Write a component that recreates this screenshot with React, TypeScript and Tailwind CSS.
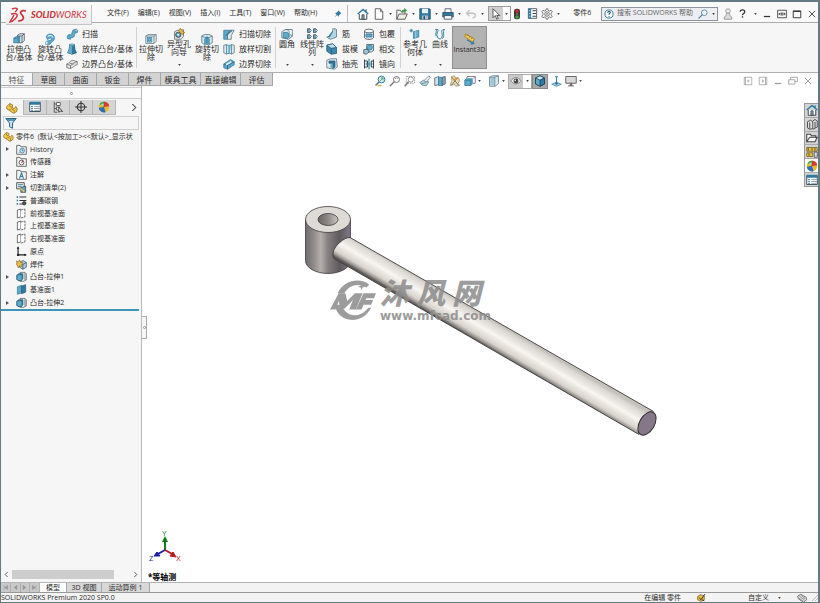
import { useState } from 'react';
import type { ReactNode } from 'react';

const BLUE = '#5fa9c9';
const DEEP = '#2f7a9e';
const INK = '#37474f';

// All glyphs share a 16x16 grid
const glyphs: Record<string, ReactNode> = {
  extrude: <><path d="M6 3 9 1h6v9l-3 3H6z" fill="#e6ecef" stroke={INK} /><path d="M12 4v9M12 4l3-3M6 4h6" fill="none" stroke={INK} /><path d="M1 7l3-2h5v6l-2 2H1z" fill={BLUE} stroke={DEEP} /><path d="M1 7h6v6M7 7l2-2" fill="none" stroke={DEEP} /></>,
  revolve: <><path d="M3 5C4 0 13 0 14 6c0 4-2 5-4 6l-2 3H2l1-4 5-1c3-1 2-4-1-3L5 9z" fill={BLUE} stroke={DEEP} /><path d="M5 5c2-3 6-2 7 1" fill="none" stroke="#d7edf6" strokeWidth="1.500" /><path d="M2 15l1-4 2 1-1 3z" fill="#d7edf6" /></>,
  sweep: <><path d="M2 14c-1-4 1-6 4-5 3 0 1-6 5-7l4 1v3l-3 1c-1 2 0 5-4 6-2 0-2 0-2 2z" fill={BLUE} stroke={DEEP} /><ellipse cx="13.500" cy="3.500" rx="1.500" ry="2" fill="#cfe7f1" stroke={DEEP} /></>,
  loft: <><path d="M5 2h6l1 7 2 4-6 2-6-2 2-4z" fill={DEEP} stroke="#245a75" /><path d="M5 2h3v13l-6-2 2-4z" fill={BLUE} /><ellipse cx="8" cy="2.500" rx="3" ry="1.200" fill="#d7edf6" stroke={DEEP} /></>,
  boundary: <><path d="M1 8c3 0 3-4 8-5l6 2v4c-4 0-5 4-9 5l-5-1z" fill="#e4e4e4" stroke="#666" /><path d="M1 8l5 2c3-1 5-5 9-5M6 10v4M5 7l5 1" fill="none" stroke="#666" /></>,
  cutExtrude: <><path d="M1 4l3-2h11v9l-3 3H1z" fill="#e0e8eb" stroke="#6d7f87" /><path d="M1 4h11v10M12 4l3-2" fill="none" stroke="#6d7f87" /><rect x="3" y="6" width="6" height="6" fill="#fff" stroke={DEEP} /><circle cx="6" cy="9" r="2" fill={BLUE} stroke={DEEP} /></>,
  hole: <><path d="M2 5l4-2h8v8l-3 4H2z" fill="#dfe6e9" stroke="#566" /><circle cx="7" cy="9" r="3.500" fill={BLUE} stroke="#333" /><circle cx="7" cy="9" r="1.300" fill="#fff" /><path d="M10 0l1 3 3-1-1 3 3 1-3 1 1 2-4-2-2-4z" fill="#edbc4b" stroke="#8a5d12" strokeWidth=".7" /></>,
  cutRevolve: <><path d="M1 4l4-2h6l4 2v9l-3 2H4l-3-2z" fill="#dce7eb" stroke="#53707d" /><path d="M5 15V8l3-3 3 3v7" fill={BLUE} stroke={DEEP} /><path d="M8 5v10M1 4l4 2h6l4-2" fill="none" stroke={DEEP} /></>,
  cutSweep: <><path d="M1 3h8l-3 5v7H1z" fill={BLUE} stroke={DEEP} /><path d="M6 15V9l3-6h6l-4 7v5z" fill="#e2e9ec" stroke="#586d76" /><path d="M4 10l8-7" stroke={DEEP} strokeWidth="2" /></>,
  cutLoft: <><path d="M1 3l4-1v13l-4-2zM15 3l-4-1v13l4-2z" fill="#e2e9ec" stroke="#586d76" /><path d="M5 3h6v11H5z" fill="#fff" stroke={DEEP} /><path d="M7 3h3l-1 11H7z" fill={BLUE} /></>,
  cutBoundary: <><path d="M1 8l9-6 5 3v4l-9 6-5-2z" fill={BLUE} stroke={DEEP} /><path d="M1 8l5 2 9-5M6 10v5" fill="none" stroke="#245a75" /><path d="M4 9l7-4" stroke="#e0f1f8" strokeWidth="2" /></>,
  fillet: <><path d="M1 5l5-3h8l1 9-5 4-9-2z" fill="#dce7eb" stroke="#53707d" /><path d="M6 2c5 0 5 3 5 6l4 3V2z" fill="#fff" stroke="#53707d" /><path d="M3 6h5c3 1 3 3 3 6l-2 2-6-1z" fill={BLUE} stroke={DEEP} /></>,
  pattern: <>{[1, 9].map(y => <g key={y}><path d={`M2 ${y}h3v5H2zM10 ${y}h3v5h-3z`} fill={BLUE} stroke={INK} /><path d={`M5 ${y}l2 2-2 3M13 ${y}l2 2-2 3`} fill="#fff" stroke={INK} /></g>)}</>,
  rib: <><path d="M9 1h3v10l-8 3-3-2 8-2z" fill="#e2e9ec" stroke="#53707d" /><path d="M9 4v7l-6 1z" fill={DEEP} stroke={DEEP} /><path d="M12 1l2 1v10l-8 3-2-1" fill="#b5d5e2" stroke="#53707d" /></>,
  draft: <><path d="M1 3l8-2 5 5v8l-7 1-6-4z" fill="#3e87a8" stroke="#245a75" /><path d="M1 3l6 4 7-1-5-5z" fill="#bfe0ed" stroke="#245a75" /><path d="M7 7v8" stroke="#245a75" /></>,
  shell: <><path d="M1 3l5-2h8l1 11-4 3-10-2z" fill="#e2e9ec" stroke="#53707d" /><path d="M4 4h8v8l-3 2V7H4z" fill={DEEP} stroke="#245a75" /><path d="M6 8h3v5H6z" fill={BLUE} /></>,
  wrap: <><path d="M2 4v9c2 3 10 3 12 0V4" fill="#e2e9ec" stroke={INK} /><ellipse cx="8" cy="4" rx="6" ry="2.500" fill="#fff" stroke={INK} /><path d="M4 8h8v4H4z" fill={BLUE} stroke={DEEP} /></>,
  intersect: <><path d="M5 2h9v8l-3 2H5z" fill="#e2e9ec" stroke={INK} /><circle cx="9" cy="6" r="3.500" fill={BLUE} stroke={DEEP} /><path d="M1 9l5-1 2 4-4 3-3-1z" fill="#9fc9da" stroke={INK} /></>,
  mirror: <><path d="M2 2v12M2 4h4v8H2M14 2v12M14 4h-3v8h3" fill="none" stroke={INK} strokeWidth="1.300" /><path d="M8 1v14" stroke={DEEP} strokeWidth="1.500" /><path d="M3 8h10M5 6v4M11 6v4" stroke={DEEP} /></>,
  refGeo: <><path d="M6 5l7-2v9l-7 2z" fill={BLUE} stroke={DEEP} /><path d="M3 1v5M.500 3.500h5M1.500 2l3 3M4.500 2l-3 3" stroke={DEEP} /><path d="M9 4v9" stroke="#b9deec" /></>,
  curve: <path d="M2 2h3c2 0-2 5-1 8 1 6 7 6 7 0 0-4-3-8 3-8M2 2c3 1-1 6 1 9M11 14c4-2 0-9 3-12" fill="none" stroke={DEEP} strokeWidth="1.300" />,
  ruler: <><path d="M2 1l12 7-2 4L1 5z" fill="#f1c85a" stroke="#a07b1b" /><path d="M4 4l1-2M7 6l1-2M10 8l1-2" stroke="#7f6114" /><path d="M4 9l8 5M9 15l4-1-1-3" fill="none" stroke={DEEP} strokeWidth="1.500" /></>,
  home: <><path d="M3 8v7h10V8" fill="#fff" stroke={INK} strokeWidth="1.300" /><path d="M1 8l7-6 7 6M12 5V2" fill="none" stroke={DEEP} strokeWidth="2" /><path d="M6.500 9h3v6h-3z" fill="#8a9da6" stroke={INK} /></>,
  file: <><path d="M3 1h7l3 4v10H3z" fill="#fff" stroke="#555" strokeWidth="1.200" /><path d="M10 1v4h3" fill="none" stroke="#555" /></>,
  open: <><path d="M1 3h5l1 2h5v3M1 3v12l3-7h11l-3 7H1" fill="#f0eee0" stroke="#555" strokeWidth="1.200" /><path d="M8 6c0-3 2-3 4-3" fill="none" stroke="#3c9a4a" strokeWidth="2" /><path d="M11 0l4 3-4 3z" fill="#3c9a4a" /></>,
  save: <><path d="M1 1h13l1 1v13H1z" fill={DEEP} stroke="#22495c" /><path d="M4 1h8v6H4z" fill="#e9f2f5" /><path d="M4 10h8v5H4z" fill="#aebfc7" /><path d="M6 11h2v4H6z" fill="#22495c" /></>,
  print: <><path d="M4 1h8v6H4z" fill="#fff" stroke={INK} /><path d="M1 6h14v6H1z" fill={DEEP} stroke="#22495c" /><path d="M3 10h10v5H3z" fill="#e9f2f5" stroke={INK} /></>,
  undo: <path d="M6 3L2 7l4 4M2 7h8c5 0 5 6 0 6" fill="none" stroke="#c3c3c3" strokeWidth="1.700" />,
  cursor: <path d="M4 1v12l3-3 2 5 2-1-2-4h4z" fill="#fff" stroke="#333" />,
  traffic: <><rect x="4" y="1" width="8" height="14" rx="3" fill="#3e3e3e" /><circle cx="8" cy="4" r="2.300" fill="#d42626" /><circle cx="8" cy="8" r="1.300" fill="#7b7343" /><circle cx="8" cy="12" r="2.300" fill="#36a642" /></>,
  options: <><path d="M2 1h12v14H2z" fill="#fff" stroke={INK} strokeWidth="1.200" /><path d="M2 1h4v14H2z" fill={DEEP} /><path d="M8 4h5M8 8h5M8 12h5" stroke={INK} strokeWidth="1.500" /><path d="M3 4h2M3 8h2M3 12h2" stroke="#fff" /></>,
  props: <><path d="M1 2h14v12H1z" fill="#fff" stroke="#3a5360" strokeWidth="1.300" /><path d="M1 1h14v4H1z" fill={DEEP} /><path d="M3 7.500h2M3 10h2M3 12.500h2" stroke={DEEP} strokeWidth="1.500" /><path d="M7 7.500h7M7 10h7M7 12.500h7" stroke="#74868f" /></>,
  gear: <><path d="M7 1h2l.500 2 2 1 2-1 1.500 2-1.500 2v2l1.500 2-1.500 2-2-1-2 1L9 15H7l-.500-2-2-1-2 1L1 11l1.500-2V7L1 5l1.500-2 2 1 2-1z" fill="#f3f3f3" stroke="#555" /><circle cx="8" cy="8" r="3" fill="none" stroke="#555" /><circle cx="8" cy="8" r="1" fill="#555" /></>,
  help: <><circle cx="8" cy="8" r="6.500" fill="#fff" stroke={DEEP} strokeWidth="1.500" /><path d="M6 6c0-3 5-2 4 0-.500 1-2 1-2 3M8 11v1.500" fill="none" stroke="#234f66" strokeWidth="1.700" /></>,
  search: <><circle cx="10" cy="6" r="4.500" fill="#f3faff" stroke="#3f7897" strokeWidth="1.200" /><path d="M7 9l-6 6" stroke="#3f7897" strokeWidth="1.700" /></>,
  user: <><circle cx="8" cy="4" r="3" fill="#eee" stroke="#999" strokeWidth="1.200" /><path d="M6 7h4l1 4 2 1v3H3v-3l2-1z" fill="#ddd" stroke="#999" strokeWidth="1.200" /></>,
  question: <path d="M4 5c0-5 8-4 8 0 0 3-4 3-4 6M8 13v2.500" fill="none" stroke="#333" strokeWidth="2.300" />,
  minimize: <path d="M3 12h10" stroke="currentColor" strokeWidth="2" />,
  span: <><path d="M1 2h14v12H1z" fill="none" stroke="currentColor" strokeWidth="1.300" /><path d="M3 8h10M5 6L3 8l2 2M11 6l2 2-2 2M8 5v6" fill="none" stroke="currentColor" strokeWidth="1.300" /></>,
  maximize: <path d="M2 3h12v11H2zM2 4h12" fill="none" stroke="currentColor" strokeWidth="1.500" />,
  close: <path d="M3 3l10 10M13 3L3 13" stroke="currentColor" strokeWidth="1.400" />,
  restore: <path d="M1 6h10v7H1zM4 6V2h11v7h-4" fill="none" stroke="currentColor" strokeWidth="1.300" />,
  paneLeft: <path d="M2 2h12v12H2zM4 2v12M9 6L7 8l2 2z" fill="none" stroke="currentColor" strokeWidth="1.200" />,
  paneRight: <path d="M2 2h12v12H2zM12 2v12M7 6l2 2-2 2z" fill="none" stroke="currentColor" strokeWidth="1.200" />,
  pin: <path d="M9 1l6 6-2 .500-3 3-.500 3-3.500-3.500L1 15l4-6-3-3 3-.500 3-3z" fill={DEEP} />,
  zoomFit: <><circle cx="10" cy="6" r="4.500" fill="#d6ecf3" stroke={DEEP} strokeWidth="1.300" /><path d="M7 9l-5 5" stroke="#59717e" strokeWidth="2" /><path d="M8 8l4-4M9 4h3v3" fill="none" stroke="#3a9b4b" /><path d="M5 14h5" stroke="#ccb24f" strokeWidth="2" /></>,
  zoomArea: <><circle cx="10" cy="6" r="4" fill="#fff" stroke="#666" strokeWidth="1.200" /><path d="M7 9l-6 6" stroke="#777" strokeWidth="2" /><path d="M8 5l2-1 2 1" fill="none" stroke="#888" /></>,
  zoomPrev: <><path d="M3 2h11v9H3z" fill="none" stroke="#888" strokeDasharray="2 1" /><circle cx="9" cy="6" r="3.500" fill="#fff" stroke="#777" /><path d="M6 9l-5 6" stroke="#777" strokeWidth="2" /></>,
  section: <><path d="M6 8l7-7 2 2-6 8z" fill="#e8eef0" stroke="#6f8189" /><path d="M1 10l5-3 3 2 4 0-3 5-5 0z" fill="#b9d5e1" stroke="#5b7886" /><path d="M3 12l6-2" stroke="#5b7886" /></>,
  book: <><path d="M1 4l5-2v11l-5 1z" fill="#dae3e7" stroke="#456" /><path d="M6 3h5v11H6z" fill={BLUE} stroke={DEEP} /><path d="M11 3l4-1v10l-4 2z" fill="#8fa5ae" stroke="#456" /></>,
  sketchTool: <><path d="M3 2l4-1 2 3 4 0 1 4-2 3 2 3-5 1-2-3-5 2 1-5 1-2z" fill="#f0dcae" stroke="#98855a" /><path d="M4 3l9 11M12 3L3 14" stroke="#6f7d84" strokeWidth="1.300" /><path d="M6 7l5-3" stroke="#d99a2d" strokeWidth="2" /></>,
  views: <><path d="M1 7h8v7H1zM1 7l2-2h8v7l-2 2" fill={BLUE} stroke={DEEP} /><path d="M4 4V2h11v9h-3" fill="none" stroke="#778" strokeWidth="1.200" /><path d="M12 5l3-3" stroke="#778" /></>,
  display: <><path d="M2 3l4-2h8v10l-4 4H2z" fill="#d8e6ec" stroke="#5b7886" /><path d="M2 3h7v12M9 3l5-2" fill="none" stroke="#5b7886" /><path d="M3 4h5v10H3z" fill="#9bcadd" /></>,
  eye: <><path d="M1 8c4-6 10-6 14 0-4 5-10 5-14 0z" fill="#e4e4e4" stroke="#777" /><circle cx="8" cy="8" r="3.200" fill="#444" /><circle cx="7" cy="7" r="1" fill="#fff" /></>,
  cube: <><path d="M2 4l6-3 6 3v8l-6 3-6-3z" fill={BLUE} stroke="#183f53" strokeWidth="1.200" /><path d="M2 4l6 3 6-3-6-3z" fill="#c4e6f3" stroke="#183f53" /><path d="M8 7l6-3v8l-6 3z" fill={DEEP} stroke="#183f53" /></>,
  anchor: <><path d="M1 12l7-3 7 3-7 3z" fill="#a7cfdf" stroke={DEEP} /><path d="M8 1v11M6 1h4M6 10l2 2 2-2" fill="none" stroke={DEEP} strokeWidth="1.500" /></>,
  monitor: <><path d="M1 2h14v9H1z" fill="#d8d8d8" stroke="#666" strokeWidth="1.300" /><path d="M7 11h2v3H7zM4 14.500h8" fill="#777" stroke="#666" strokeWidth="1.300" /></>,
  part: <><path d="M1 6l4-4 4 2-1 3 3 2 2-3 2 3-1 4-4 2-6-4-3-2z" fill="#f2c84c" stroke="#8b6815" /><path d="M5 2v4l3 1M4 11l3-2 4 2v4" fill="none" stroke="#a27b1d" /></>,
  config: <><path d="M3 1v14h4M3 4h3M3 10h3" fill="none" stroke="#555" strokeWidth="1.200" /><path d="M6 2h5v4H6zM6 8h4v4H6z" fill="#fff" stroke="#555" strokeWidth="1.200" /><path d="M9 8l5 6-3-.500L9 15z" fill="#fff" stroke="#333" strokeWidth="1.200" /></>,
  target: <><circle cx="8" cy="8" r="5" fill="none" stroke="#333" strokeWidth="1.400" /><path d="M8 0v16M0 8h16" stroke="#333" strokeWidth="1.400" /></>,
  ball: <><circle cx="8" cy="8" r="7" fill="#e9ba2d" /><path d="M8 8L2 4a7 7 0 0 1 7-3z" fill="#39a34b" /><path d="M8 8V1a7 7 0 0 1 7 6z" fill="#d93b2f" /><path d="M8 8L1 9a7 7 0 0 0 9 6z" fill="#2a6fb8" /><circle cx="6" cy="5" r="1.800" fill="#fff" fillOpacity=".6" /></>,
  funnel: <><path d="M1 2h14l-5 6v7l-4-2V8z" fill="#c7e2ec" stroke="#29647f" strokeWidth="1.300" /><path d="M2 3h12l-2 2H4z" fill={DEEP} /></>,
  history: <><path d="M1 2h5l1 2h8v11H1z" fill="#f4f4f4" stroke="#555" strokeWidth="1.200" /><circle cx="9" cy="9.500" r="3.500" fill="#b8dbe7" stroke={DEEP} /><path d="M9 7.500v2h2M4 13l2-2" fill="none" stroke={DEEP} /></>,
  sensor: <><path d="M1 2h5l1 2h8v11H1z" fill="#f4f4f4" stroke="#555" strokeWidth="1.200" /><circle cx="8" cy="9.500" r="3.500" fill="#fff" stroke="#444" strokeWidth="1.200" /><path d="M8 10l2-3" stroke="#b33" strokeWidth="1.500" /></>,
  note: <><path d="M1 2h5l1 2h8v11H1z" fill="#f4f4f4" stroke="#555" strokeWidth="1.200" /><path d="M5 14l3-8 3 8M6 11h4" fill="none" stroke={DEEP} strokeWidth="1.600" /></>,
  cutList: <><path d="M1 1h11v9H1z" fill="#f4f4f4" stroke="#444" strokeWidth="1.300" /><path d="M3 4h7M3 7h5" stroke={DEEP} strokeWidth="1.500" /><path d="M7 8l7-2v9H7z" fill={BLUE} stroke="#333" /><path d="M6 9l6 5" stroke="#edbc4b" strokeWidth="2" /></>,
  material: <><path d="M1 3h2M1 8h2M1 13h2" stroke={DEEP} strokeWidth="2.500" /><path d="M5 3h10M5 8h10M5 13h5" stroke="#333" strokeWidth="1.500" /><circle cx="12" cy="12" r="2.500" fill="#555" stroke="#222" /></>,
  plane: <><path d="M2 3l5-1.500V13l-5 1.500z" fill="#fff" stroke="#555" strokeWidth="1.200" /><path d="M7 3l6-1.500V13l-6 1.500" fill="#fff" stroke="#555" strokeWidth="1.200" strokeDasharray="4 1" /></>,
  origin: <><path d="M3 1v12h12" fill="none" stroke="#222" strokeWidth="1.700" /><path d="M1 4l2-3 2 3M12 11l3 2-3 2" fill="#222" /><circle cx="3" cy="13" r="1.700" fill="#222" /></>,
  weld: <><path d="M5 5l5-3 5 3v7l-5 3-5-3z" fill="#a8ccd9" stroke="#37505c" /><path d="M5 5l5 3 5-3M10 8v7" fill="none" stroke="#37505c" /><path d="M0 3l4 1 1-3 2 4 3 0-2 3 1 3-4-1-2 3-1-4-3-2 3-1z" fill="#eebc48" stroke="#7d4c13" strokeWidth=".7" /></>,
  boss: <><path d="M6 2h7l2 2v9l-4 2H6z" fill="#e6ecef" stroke="#455" /><path d="M13 3v10" stroke="#455" /><path d="M1 6l3-2h6v7l-2 3H3l-2-2z" fill={DEEP} stroke="#245a75" /><path d="M2 6h6v7H3l-1-1z" fill={BLUE} /></>,
  planeSolid: <><path d="M2 4l6-2v11l-6 2z" fill={BLUE} stroke={DEEP} /><path d="M8 3l6-2v11l-6 2z" fill={DEEP} stroke="#245a75" /></>,
  cylinders: <><path d="M2 5l4-2 3 2v9l-4 1-3-2zM9 4l3-2 3 2v8l-6 3" fill="#e1e1e1" stroke="#444" strokeWidth="1.200" /><path d="M5 6v8M12 5v8" stroke="#444" strokeWidth="1.300" /></>,
  folder: <path d="M1 13V3h5l1 2h6v3M1 13l4-6h10l-3 6z" fill="#fafafa" stroke="#444" strokeWidth="1.400" />,
  palette: <><path d="M1 2h14v5H1zM1 9h8v5H1z" fill="#e7c04c" stroke="#6d5a1f" /><path d="M11 8h4v7h-4z" fill="#d8dfe2" stroke="#444" /><path d="M3 3v3M8 3v3M12 3v3M4 10v3" fill="none" stroke="#554514" strokeWidth="1.300" /></>,
  badge: <><path d="M1 6l5-3 7 2v7l-6 3-6-3z" fill="#e9b93c" stroke="#5b4411" /><path d="M4 8l3 4 7-10M9 12l4 2" fill="none" stroke="#333" strokeWidth="1.700" /></>,
  tag: <><path d="M1 5l5-3 9 5v4l-5 4-8-6z" fill="#e0e0e0" stroke="#555" strokeWidth="1.200" /><path d="M4 5l8 6M7 4l6 5M3 8l7 5" stroke="#666" /></>,
};

const Icon = ({ name, className = 'size-3' }: { name: string; className?: string }) => (
  <svg viewBox="0 0 16 16" className={`shrink-0 ${className}`} aria-hidden="true">{glyphs[name]}</svg>
);

const Caret = ({ className = '' }: { className?: string }) => (
  <svg viewBox="0 0 4 3" className={`h-[2px] w-[3px] shrink-0 ${className}`} aria-hidden="true"><path d="M0 0h4L2 3z" fill="#444" /></svg>
);

const menus = [['文件', 'F'], ['编辑', 'E'], ['视图', 'V'], ['插入', 'I'], ['工具', 'T'], ['窗口', 'W'], ['帮助', 'H']];
const commandTabs = ['特征', '草图', '曲面', '钣金', '焊件', '模具工具', '直接编辑', '评估'];
const panelTabs = [['part', '特征管理器'], ['props', '属性'], ['config', '配置'], ['target', '尺寸专家'], ['ball', '外观']];
const treeItems: { icon: string; label: string; expandable?: boolean }[] = [
  { icon: 'history', label: 'History', expandable: true },
  { icon: 'sensor', label: '传感器' },
  { icon: 'note', label: '注解', expandable: true },
  { icon: 'cutList', label: '切割清单(2)', expandable: true },
  { icon: 'material', label: '普通碳钢' },
  { icon: 'plane', label: '前视基准面' },
  { icon: 'plane', label: '上视基准面' },
  { icon: 'plane', label: '右视基准面' },
  { icon: 'origin', label: '原点' },
  { icon: 'weld', label: '焊件' },
  { icon: 'boss', label: '凸台-拉伸1', expandable: true },
  { icon: 'planeSolid', label: '基准面1' },
  { icon: 'boss', label: '凸台-拉伸2', expandable: true },
];

const BigTool = ({ icon, label, menu, className = 'w-7' }: { icon: string; label: string; menu?: boolean; className?: string }) => (
  <button className={`flex h-full shrink-0 flex-col items-center pb-[6px] ${menu ? 'pt-[5px]' : 'pt-[10px]'} ${className}`}>
    <Icon name={icon} />
    <span className="text-center text-[8px] leading-[8px] whitespace-pre">{label}</span>
    {menu && <Caret className="mt-auto" />}
  </button>
);

const SmallTools = ({ items, className }: { items: string[][]; className: string }) => (
  <div className={`flex shrink-0 flex-col pt-[3px] ${className}`}>
    {items.map(([icon, label]) => (
      <button key={label} className="flex h-[15px] items-center gap-1 text-[8px] whitespace-nowrap">
        <Icon name={icon} />{label}
      </button>
    ))}
  </div>
);

const Divider = () => <div className="my-1 w-px shrink-0 bg-[#d2d2d2]" />;

const QuickTool = ({ name, label }: { name: string; label: string }) => (
  <button aria-label={label} className="flex shrink-0 items-center">
    <Icon name={name} />
    <span className="flex w-[11px] justify-center"><Caret /></span>
  </button>
);

const TitleBar = () => (
  <header className="relative z-10 flex h-[21px] shrink-0 items-center border-b border-[#a9adaf] bg-[#f9f9f9] pt-[3px]">
    <div className="ml-[5px] flex h-5 w-[86px] shrink-0 items-center gap-1 self-start border-r border-b border-[#c4c4c4] bg-linear-to-b from-[#fbfbfb] to-[#ececec] px-[3px]">
      <svg viewBox="0 0 18 16" className="h-4 w-[18px] shrink-0" fill="none" stroke="#c8353b" strokeWidth="1.500">
        <path d="M3 2c5-2 7 0 3 3M2 7c8-2 7 2 4 5-2 2-4 3-5 3l4-7" />
        <path d="M17 4c-5-1-7 1-4 4s1 6-4 6" strokeWidth="1.700" />
      </svg>
      <span className="font-['Lato'] text-[9px] leading-none text-[#c8353b] italic"><b className="font-black">SOLID</b>WORKS</span>
    </div>
    <nav className="ml-[15px] flex shrink-0 gap-[9px] text-[7px]">
      {menus.map(([label, key]) => (
        <button key={key} className="whitespace-nowrap">{label}({key})</button>
      ))}
    </nav>
    <button aria-label="固定菜单" className="ml-[17px] shrink-0"><Icon name="pin" className="size-2" /></button>
    <div className="ml-[5px] h-full w-px shrink-0 bg-[#bdbdbd]" />
    <div className="ml-[9px] flex shrink-0 items-center">
      <button aria-label="主页" className="mr-1"><Icon name="home" /></button>
      <QuickTool name="file" label="新建" />
      <QuickTool name="open" label="打开" />
      <QuickTool name="save" label="保存" />
      <QuickTool name="print" label="打印" />
      <QuickTool name="undo" label="撤销" />
      <button aria-label="选择" className="flex h-[15px] items-center border border-[#9c9c9c] bg-[#cfcfcf]">
        <Icon name="cursor" className="mx-px size-3" />
        <span className="flex h-full w-[7px] items-center justify-center bg-white"><Caret /></span>
      </button>
      <button aria-label="重建模型"><Icon name="traffic" /></button>
      <button aria-label="文件属性" className="ml-1"><Icon name="options" className="size-[11px]" /></button>
      <span className="w-[3px]" />
      <QuickTool name="gear" label="选项" />
    </div>
    <h1 className="ml-[9px] shrink-0 text-[7px] whitespace-nowrap">零件6</h1>
    <div className="ml-auto flex shrink-0 items-center pr-px text-[#333]">
      <label className="flex h-[14px] w-[117px] items-center border border-[#8e959e] bg-[#eceef2] px-[2px]">
        <Icon name="help" className="size-[10px]" />
        <input aria-label="搜索帮助" placeholder="搜索 SOLIDWORKS 帮助" className="ml-[3px] w-0 flex-1 bg-transparent text-[7px] outline-none placeholder:text-[#666]" />
        <Icon name="search" className="mr-1 size-[10px]" />
        <Caret />
      </label>
      <button aria-label="登录" className="ml-1"><Icon name="user" /></button>
      <button aria-label="帮助" className="ml-1 flex items-center gap-[7px]"><Icon name="question" className="size-[9px]" /><Caret /></button>
      {[['minimize', '最小化'], ['span', '跨屏'], ['maximize', '最大化'], ['close', '关闭']].map(([name, label]) => (
        <button key={name} aria-label={label} className="ml-[5px]"><Icon name={name} className="size-[10px]" /></button>
      ))}
    </div>
  </header>
);

const Ribbon = () => (
  <div className="flex h-[50px] shrink-0 overflow-hidden border-b border-[#aeb1b3] bg-[#f6f6f6] pl-[3px]">
    <BigTool icon="extrude" label={'拉伸凸\n台/基体'} className="w-[30px]" />
    <BigTool icon="revolve" label={'旋转凸\n台/基体'} className="w-8" />
    <SmallTools className="w-[70px]" items={[['sweep', '扫描'], ['loft', '放样凸台/基体'], ['boundary', '边界凸台/基体']]} />
    <Divider />
    <BigTool icon="cutExtrude" label={'拉伸切\n除'} />
    <BigTool icon="hole" label={'异型孔\n向导'} menu />
    <BigTool icon="cutRevolve" label={'旋转切\n除'} />
    <SmallTools className="w-[54px] pl-[2px]" items={[['cutSweep', '扫描切除'], ['cutLoft', '放样切割'], ['cutBoundary', '边界切除']]} />
    <Divider />
    <BigTool icon="fillet" label="圆角" menu className="w-[22px]" />
    <BigTool icon="pattern" label={'线性阵\n列'} menu />
    <SmallTools className="w-[37px]" items={[['rib', '筋'], ['draft', '拔模'], ['shell', '抽壳']]} />
    <SmallTools className="w-[37px]" items={[['wrap', '包覆'], ['intersect', '相交'], ['mirror', '镜向']]} />
    <Divider />
    <BigTool icon="refGeo" label={'参考几\n何体'} menu />
    <BigTool icon="curve" label="曲线" menu className="w-[22px]" />
    <button className="my-[3px] ml-px flex w-[35px] shrink-0 flex-col items-center border border-[#8f8f8f] bg-[#b2b2b2] pt-[6px] text-[7px] leading-[9px]">
      <Icon name="ruler" />
      Instant3D
    </button>
  </div>
);

const ViewToolbar = () => (
  <div className="ml-[101px] flex h-4 shrink-0 items-center gap-[3px]">
    {['zoomFit', 'zoomArea', 'zoomPrev', 'section', 'book', 'sketchTool'].map(name => (
      <button key={name} aria-label={name}><Icon name={name} /></button>
    ))}
    <button aria-label="views" className="flex items-center gap-[2px]"><Icon name="views" /><Caret /></button>
    <button aria-label="display" className="ml-1 flex items-center gap-[2px]"><Icon name="display" /><Caret /></button>
    <button aria-label="visibility" className="flex h-[15px] items-center border border-[#aaa] bg-[#c9c9c9] pl-px">
      <Icon name="eye" /><span className="ml-px flex h-full w-2 items-center justify-center bg-white"><Caret /></span>
    </button>
    <button aria-label="appearance" className="-ml-[3px] flex h-[15px] w-4 items-center justify-center border border-[#888] bg-[#a9a9a9]"><Icon name="cube" /></button>
    <button aria-label="scene"><Icon name="anchor" className="size-[11px]" /></button>
    <button aria-label="settings" className="flex items-center gap-[2px]"><Icon name="monitor" /><Caret /></button>
  </div>
);

const FeaturePanel = () => {
  const [tab, setTab] = useState('part');
  return (
    <aside className="flex w-[141px] shrink-0 flex-col border-r border-[#b9b9b9] bg-[#f6f6f6]">
      <div className="mt-px flex h-3 shrink-0 items-center justify-center border-y border-[#cfcfcf] bg-[#fafafa]">
        <span className="size-[3px] rounded-full border border-[#999]" />
      </div>
      <div className="flex h-4 shrink-0 pt-px">
        {panelTabs.map(([name, label]) => (
          <button key={name} aria-label={label} onClick={() => setTab(name)}
            className={`flex w-[23px] items-center justify-center border-r border-[#b5b5b5] ${tab === name ? 'bg-[#f6f6f6]' : 'border-b bg-[#d4d4d4]'}`}>
            <Icon name={name} />
          </button>
        ))}
        <button aria-label="更多" className="mr-1 ml-auto">
          <svg viewBox="0 0 6 8" className="h-[7px] w-[6px]"><path d="M1 0l4 4-4 4" fill="none" stroke="#444" strokeWidth="1.200" /></svg>
        </button>
      </div>
      <button aria-label="过滤" className="mx-[2px] mt-px flex h-[14px] shrink-0 items-center border border-[#d0d0d0] pl-px">
        <Icon name="funnel" />
      </button>
      <ul className="flex h-[179px] shrink-0 flex-col text-[7px] leading-none whitespace-nowrap">
        <li className="flex min-h-0 flex-1 items-center gap-[2px] overflow-hidden pl-[2px] whitespace-pre">
          <Icon name="part" className="size-[11px]" />{'零件6  (默认<按加工><<默认>_显示状'}
        </li>
        {treeItems.map(item => (
          <li key={item.label} className="flex min-h-0 flex-1 items-center">
            <span className="flex w-[15px] shrink-0 pl-[5px]">
              {item.expandable && <svg viewBox="0 0 3 4" className="h-1 w-[3px]"><path d="M0 0l3 2-3 2z" fill="#555" /></svg>}
            </span>
            <Icon name={item.icon} className="mr-[3px] size-[11px]" />
            {item.label}
          </li>
        ))}
      </ul>
      <div className="mr-[2px] h-[2px] shrink-0 bg-[#3f94ba]" />
      <div className="mt-auto mb-[3px] flex h-[9px] shrink-0 items-center gap-1 px-[3px]">
        <svg viewBox="0 0 4 6" className="h-[5px] w-1"><path d="M4 0L1 3l3 3" fill="none" stroke="#444" /></svg>
        <div className="h-full w-[102px] bg-[#cdcdcd]" />
        <svg viewBox="0 0 4 6" className="ml-auto h-[5px] w-1"><path d="M0 0l3 3-3 3" fill="none" stroke="#444" /></svg>
      </div>
    </aside>
  );
};

// Isometric handle: a bored hub with a long round bar
const Model = () => (
  <svg viewBox="300 200 360 240" className="absolute top-[114px] left-[158px] h-60 w-[360px]" aria-label="模型">
    <defs>
      <linearGradient id="hub" x1="0" x2="1">
        <stop offset="0" stopColor="#716c6d" /><stop offset=".18" stopColor="#8f8a89" /><stop offset=".34" stopColor="#b5b0ad" />
        <stop offset=".5" stopColor="#858080" /><stop offset=".75" stopColor="#5f5a5c" /><stop offset="1" stopColor="#83748a" />
      </linearGradient>
      <linearGradient id="bore" x1="0" x2="1">
        <stop offset="0" stopColor="#6a6263" /><stop offset=".5" stopColor="#8f8989" /><stop offset="1" stopColor="#cbc6c1" />
      </linearGradient>
      <linearGradient id="bar" gradientUnits="userSpaceOnUse" x1="480" y1="313" x2="467" y2="335">
        <stop offset="0" stopColor="#c4c0ba" /><stop offset=".12" stopColor="#dbd8d3" /><stop offset=".3" stopColor="#eae7e3" />
        <stop offset=".45" stopColor="#f8f6f2" /><stop offset=".62" stopColor="#e6e2dd" /><stop offset=".78" stopColor="#d8d3cd" />
        <stop offset=".9" stopColor="#9f9a95" /><stop offset="1" stopColor="#5b5754" />
      </linearGradient>
    </defs>
    <path d="M305.500 219.500v41a22.500 13 0 0 0 45 0v-41z" fill="url(#hub)" stroke="#3d3a3b" strokeWidth=".8" />
    <ellipse cx="328" cy="219.500" rx="22.500" ry="13" fill="#dedad5" stroke="#3d3a3b" strokeWidth=".8" />
    <ellipse cx="328" cy="219.500" rx="10" ry="6" fill="url(#bore)" stroke="#3d3a3b" strokeWidth=".8" />
    <path d="M350 237.500c-5-1-17 9-17 16 0 2 0 4 1 5L639 434.500l14.500-23z" fill="url(#bar)" />
    <path d="M653.500 411.500L350 237.500c-5-1-17 9-17 16 0 2 0 4 1 5L639 434.500" fill="none" stroke="#3d3a3b" strokeWidth=".9" />
    <ellipse cx="647" cy="423.500" rx="7.500" ry="12.700" transform="rotate(30 647 423.500)" fill="#857787" stroke="#2f2c30" />
  </svg>
);

const Watermark = () => (
  <div className="absolute top-[191px] left-[188px] flex items-start gap-1 text-[#8b8b8b] opacity-85">
    <svg viewBox="0 0 48 46" className="mt-[2px] h-11 w-[46px]" fill="currentColor">
      <path d="M8 15C14 1 32-2 41 6l-3 3C30 4 20 6 15 15z" />
      <path d="M5 27h7c4 13 19 15 28 3h3C34 48 8 47 5 27z" />
      <path d="M0 32L9 15h7l2 8 8-8h8l-7 17h-7l4-10-9 9h-4l-2-8-3 9z" />
      <path d="M35 15h13l-2 5H38l-1 2h8l-2 5h-8l-2 5h-6z" />
      <path d="M33 4l1 3 3 1-3 1-1 3-1-3-3-1 3-1z" />
    </svg>
    <div>
      <div className="flex gap-[7px] text-[29px] leading-[32px] font-black italic">
        <span>沐</span><span>风</span><span>网</span>
      </div>
      <p className="font-['DejaVu_Sans'] text-[12px] leading-[14px] font-bold">www.mfcad.com</p>
    </div>
  </div>
);

const Viewport = () => (
  <main className="relative flex min-w-0 flex-1 justify-end overflow-hidden bg-white pt-[17px]">
    <Model />
    <Watermark />
    <button aria-label="折叠面板" className="absolute top-[230px] left-0 flex h-[23px] w-[5px] items-center justify-center border border-l-0 border-[#aaa] bg-[#f6f6f6]">
      <span className="size-[3px] rounded-full border border-[#999]" />
    </button>
    <div className="absolute bottom-px left-[6px]">
      <svg viewBox="0 0 34 34" className="h-[34px] w-[34px]" fontSize="7" fontFamily="Liberation Sans">
        <path d="M17 19V7" stroke="#157a1d" strokeWidth="2" /><path d="M14 11l3-6 3 6z" fill="#157a1d" />
        <path d="M17 19l-9 5" stroke="#1c1caf" strokeWidth="2" /><path d="M6 25l3-4 3 4z" fill="#1c1caf" stroke="#1c1caf" />
        <path d="M17 19l9 5" stroke="#b91d1d" strokeWidth="2" /><path d="M28 26l-6-1 3-4z" fill="#b91d1d" stroke="#b91d1d" />
        <text x="14" y="5" fill="#157a1d">Y</text><text x="1" y="30" fill="#1c1caf">Z</text><text x="28" y="30" fill="#b91d1d">X</text>
      </svg>
      <p className="mt-[7px] text-[8px] leading-[9px] font-bold text-black">*等轴测</p>
    </div>
    <div className="relative flex h-[84px] w-[14px] flex-col border border-r-0 border-[#999]">
      {['home', 'cylinders', 'folder', 'palette', 'ball', 'props'].map(name => (
        <button key={name} aria-label={name} className={`flex flex-1 items-center justify-center border-b border-[#aaa] last:border-b-0 ${name === 'ball' ? 'bg-white' : 'bg-[#d3d3d3]'}`}>
          <Icon name={name} />
        </button>
      ))}
    </div>
  </main>
);

export default function App() {
  const [tab, setTab] = useState('特征');

  return (
    <div lang="zh-CN" className="flex h-screen flex-col overflow-hidden border border-t-2 border-r-2 border-[#647b86] bg-white font-['Open_Sans','Noto_Sans_CJK_SC',sans-serif] text-[#2b2b2b]">
      <TitleBar />
      <Ribbon />

      {/* Command tabs + heads-up view toolbar */}
      <div className="relative z-10 flex h-[13px] shrink-0 items-start">
        <div className="flex h-full shrink-0 border-b border-[#a5a5a5]">
          {commandTabs.map(name => (
            <button key={name} onClick={() => setTab(name)}
              className={`border-r border-[#a5a5a5] text-[8px] leading-[11px] whitespace-nowrap ${name.length > 2 ? 'w-10' : 'w-8'} ${tab === name ? 'bg-[#f6f6f6] text-[#555]' : 'bg-[#d3d3d3]'}`}>
              {name}
            </button>
          ))}
        </div>
        <ViewToolbar />
        <div className="ml-auto flex h-4 shrink-0 items-center gap-[5px] pr-[5px] text-[#999]">
          {['paneLeft', 'paneRight', 'minimize', 'restore', 'close'].map(name => (
            <button key={name} aria-label={name}><Icon name={name} className="size-[10px]" /></button>
          ))}
        </div>
      </div>

      <div className="flex min-h-0 flex-1">
        <FeaturePanel />
        <Viewport />
      </div>

      {/* Document tabs */}
      <div className="flex h-[10px] shrink-0 border-t border-[#b4b4b4] bg-[#f3f3f3] text-[7px] leading-[9px] whitespace-nowrap">
        <div className="flex w-[39px] bg-[#c9c9c9]">
          {['M3 2v6M8 2L4 5l4 3z', 'M7 2L3 5l4 3z', 'M3 2l4 3-4 3z', 'M7 2v6M2 2l4 3-4 3z'].map(d => (
            <button key={d} aria-label="切换" className="flex flex-1 items-center justify-center border-r border-[#b0b0b0]">
              <svg viewBox="0 0 10 10" className="size-[7px]"><path d={d} fill="#999" stroke="#999" /></svg>
            </button>
          ))}
        </div>
        <button className="w-[27px] border-r border-[#a5a5a5] bg-white">模型</button>
        <button className="w-[35px] border-r border-[#a5a5a5] bg-[#d8d8d8]">3D 视图</button>
        <button className="w-12 border-r border-[#a5a5a5] bg-[#d8d8d8]">运动算例 1</button>
      </div>

      <footer className="flex h-[10px] shrink-0 items-center border-t border-[#999] bg-[#f3f3f3] text-[7px] leading-none whitespace-nowrap">
        <span>SOLIDWORKS Premium 2020 SP0.0</span>
        <span className="ml-auto">在编辑 零件</span>
        <Icon name="badge" className="ml-4 size-[9px]" />
        <button className="ml-[42px] flex items-center gap-[9px]">自定义<Caret /></button>
        <Icon name="tag" className="ml-4 size-[10px]" />
        <svg viewBox="0 0 8 8" className="ml-[5px] size-[6px]"><path d="M8 0L0 8M8 4L4 8" stroke="#aaa" /></svg>
      </footer>
    </div>
  );
}
